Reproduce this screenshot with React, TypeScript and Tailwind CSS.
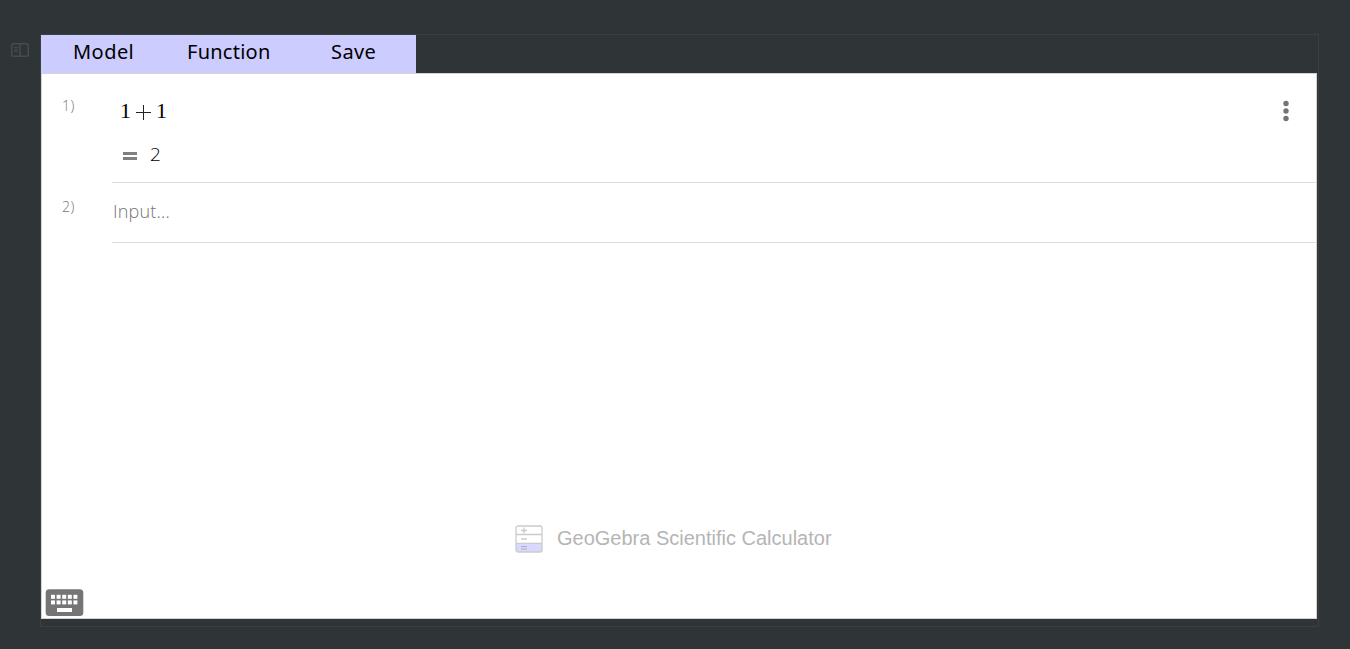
import React from "react";

function SplitViewIcon() {
  return (
    <svg className="mt-[43px] ml-[11px] h-[14px] w-[18px]" viewBox="0 0 18 14" fill="none" stroke="#464b4e">
      <rect x="0.75" y="0.75" width="16.5" height="12.5" rx="1.5" strokeWidth="1.5" />
      <path d="M9 1v12" strokeWidth="1.5" />
      <path d="M3 4.5h4M3 6.5h4M3 8.5h4" />
    </svg>
  );
}

function MoreIcon() {
  return (
    <svg className="mt-[26px] mr-[27px] h-[22px] w-[6px]" viewBox="0 0 6 22" fill="#757575">
      <circle cx="3" cy="3.5" r="2.7" />
      <circle cx="3" cy="11" r="2.7" />
      <circle cx="3" cy="18.5" r="2.7" />
    </svg>
  );
}

function CalculatorLogo() {
  return (
    <svg className="h-[28px] w-[28px]" viewBox="0 0 28 28" fill="none" stroke="#cbcbcb">
      <path d="M1 18h26v7a2 2 0 0 1-2 2H3a2 2 0 0 1-2-2z" fill="#d9d9ff" stroke="none" />
      <rect x="1" y="1" width="26" height="26" rx="2" strokeWidth="1.3" />
      <path d="M1 9.5h26M1 18.3h26" strokeWidth="1.3" />
      <path d="M6 5.5h6M9 2.5v6M6 14h6" strokeWidth="1.3" />
      <path d="M6 21.5h6M6 24h6" stroke="#adadc0" />
    </svg>
  );
}

const keyColumns = [6, 11.6, 17.2, 22.8, 28.4];

function KeyboardButton() {
  return (
    <button aria-label="Keyboard" className="h-[28px] w-[39px]">
      <svg className="block" width="39" height="28" viewBox="0 0 39 28">
        <rect x="0.7" y="0.3" width="37.6" height="26.6" rx="3.5" fill="#757575" />
        <g fill="#fff">
          {keyColumns.map((x) => (
            <React.Fragment key={x}>
              <rect x={x} y="5.8" width="4" height="4" />
              <rect x={x} y="11.4" width="4" height="4" />
            </React.Fragment>
          ))}
          <rect x="12" y="19" width="15" height="4" />
        </g>
      </svg>
    </button>
  );
}

export default function App() {
  return (
    <div className="flex h-[649px] w-[1350px] overflow-hidden bg-[#2f3437]">
      <div className="w-[40px] shrink-0">
        <SplitViewIcon />
      </div>
      <div className="mt-[34px] h-[593px] w-[1279px] border border-[#3a3f42]">
        <nav className="flex h-[38px] w-[375px] bg-[#ccccff] font-['Noto_Sans',sans-serif] text-[20px] leading-[34px] text-black">
          <span className="w-[114px] pl-[32px] tracking-[0.45px]">Model</span>
          <span className="w-[144px] pl-[32px] tracking-[0.25px]">Function</span>
          <span className="pl-[32px] tracking-[0.4px]">Save</span>
        </nav>
        <main className="flex h-[546px] w-[1276px] flex-col border border-[#d3d3d3] bg-white">
          <section className="flex h-[109px]">
            <span className="w-[70px] shrink-0 pt-[21px] pl-[20px] font-['Open_Sans',sans-serif] text-[14px] leading-[22px] font-light tracking-[0.6px] text-[#757575]">1)</span>
            <div className="flex grow justify-between border-b border-[#dcdcdc]">
              <div className="text-black">
                <div className="flex h-[76px] gap-[4px] pt-[25px] pl-[8px] font-['Liberation_Serif',serif] text-[22px] leading-[24px]">
                  <span className="w-[12px]">1</span>
                  <svg className="mt-[6px] h-[15px] w-[15px]" viewBox="0 0 15 15" stroke="#222">
                    <path d="M0 7.5h15M7.5 0v15" />
                  </svg>
                  <span className="pl-px">1</span>
                </div>
                <div className="flex h-[24px] pl-[11px]">
                  <div className="mt-[2px] mr-[13px] flex h-[8px] w-[14px] flex-col justify-between">
                    <span className="h-[3px] bg-[#808080]" />
                    <span className="h-[3px] bg-[#808080]" />
                  </div>
                  <span className="-mt-[8px] font-['Open_Sans',sans-serif] text-[19px] leading-[24px] font-light">2</span>
                </div>
              </div>
              <MoreIcon />
            </div>
          </section>
          <section className="flex h-[60px]">
            <span className="w-[70px] shrink-0 pt-[13px] pl-[20px] font-['Open_Sans',sans-serif] text-[14px] leading-[22px] font-light tracking-[0.6px] text-[#757575]">2)</span>
            <div className="grow border-b border-[#dcdcdc] pt-[16px] pl-px font-['Open_Sans',sans-serif] text-[18px] leading-[24px] font-light tracking-[0.2px] text-[#757575]">Input...</div>
          </section>
          <div className="grow" />
          <div className="flex h-[28px] items-center gap-[14px] pl-[473px] font-['Liberation_Sans',sans-serif] text-[20px] text-[#b5b5b5]">
            <CalculatorLogo />
            <span className="-mt-[2px]">GeoGebra Scientific Calculator</span>
          </div>
          <footer className="h-[65px] shrink-0 pt-[36px] pl-[3px]">
            <KeyboardButton />
          </footer>
        </main>
      </div>
    </div>
  );
}
